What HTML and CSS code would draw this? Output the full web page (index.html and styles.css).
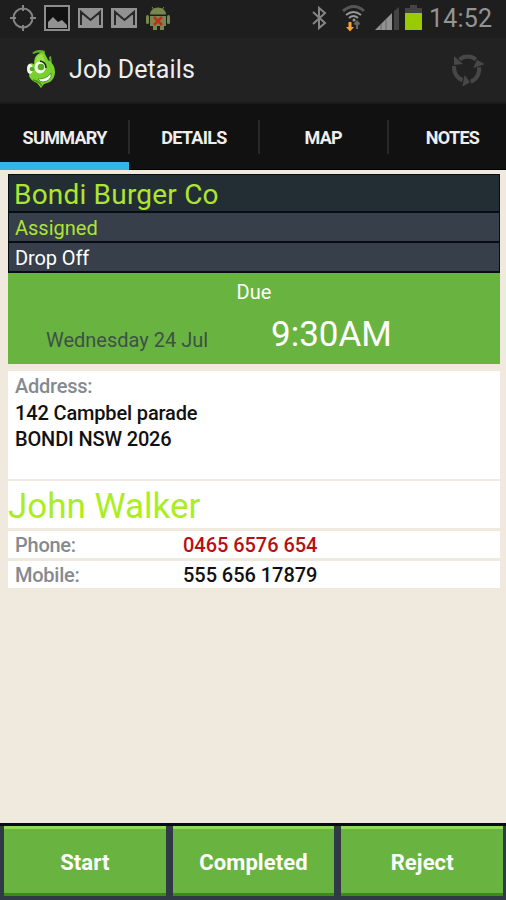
FILE: index.html
```html
<!DOCTYPE html>
<html lang="en">
<head>
  <meta charset="UTF-8">
  <title>Job Details</title>
  <link rel="stylesheet" href="styles.css">
</head>
<body>

  <!-- STATUS BAR -->
  <div class="status-bar">
    <svg class="status-icons" width="180" height="38" viewBox="0 0 180 38">
      <g fill="none" stroke="#858585" stroke-width="2">
        <circle cx="23" cy="18" r="9.5"/>
        <path d="M23 5v6M23 25v6M10 18h6M30 18h6"/>
      </g>
      <rect x="45" y="6" width="24" height="24" fill="#111" stroke="#8c8c8c" stroke-width="2"/>
      <path d="M48 28v-6l5-5 5 5 4-2 5 5v3z" fill="#929292"/>
      <g fill="#929292">
        <rect x="78" y="8" width="25" height="20"/>
        <rect x="111" y="8" width="26" height="20"/>
      </g>
      <path d="M81 25V12l9.500 8 9.500-8v13M115 25V12l9.500 8 9.500-8v13" fill="none" stroke="#292929" stroke-width="2"/>
      <g fill="#77874d">
        <path d="M150 14.500a8 7 0 0 1 16 0z"/>
        <rect x="150" y="16" width="16" height="10"/>
        <rect x="146" y="15" width="3" height="9" rx="1.500"/>
        <rect x="167" y="15" width="3" height="9" rx="1.500"/>
        <rect x="153" y="25" width="4" height="5"/>
        <rect x="160" y="25" width="4" height="5"/>
        <path d="M152 7l3 4M164 7l-3 4" stroke="#77874d"/>
      </g>
      <path d="M154 17l8 8M162 17l-8 8" stroke="#c22b20" stroke-width="2.500"/>
    </svg>
    <svg class="status-icons" width="125" height="38" viewBox="300 0 125 38">
      <path d="M313 12l12 11-6 5V8l6 5-12 11" fill="none" stroke="#858585" stroke-width="2"/>
      <path d="M343 11q11-9 21 0" fill="none" stroke="#555" stroke-width="3"/>
      <path d="M346 15q7.500-6 15 0M349 18q4.500-4 9 0" fill="none" stroke="#999" stroke-width="2"/>
      <circle cx="354" cy="20" r="1.500" fill="#999"/>
      <path d="M348.500 22h3v5h2.500l-4 4.500-4-4.500h2.500z" fill="#f5a32a"/>
      <path d="M357 29v-6M354.500 24.500l2.500-3 2.500 3" fill="none" stroke="#666" stroke-width="2"/>
      <path d="M375 30l17-17v17z" fill="#929292"/>
      <path d="M381 24v6M386 19v11" stroke="#666"/>
      <path d="M394 30V11l5-4v23z" fill="#444"/>
      <path d="M410 5h7v3h5v5h-17V8h5z" fill="#444"/>
      <rect x="405" y="13" width="17" height="17" fill="#99cc00"/>
    </svg>
    <span class="clock">14:52</span>
  </div>

  <!-- TITLE BAR -->
  <header class="title-bar">
    <svg class="logo" width="32" height="42" viewBox="25 49 32 42">
      <path d="M32 53q5-5 13-2l-1 3q-7-3-10 0z" fill="#5fb02a"/>
      <path d="M50 64l-1-7 2-1 1 8z" fill="#5fb02a"/>
      <path d="M34 64q0-9 6-11l4-1 4 8q7 4 7 12 0 6-5 10l-6 2-3 4-4-5q-6-2-8-7l1-5q-4-3-2-6 2-3 6-1z" fill="#7ad02d"/>
      <path d="M35 63q1-8 7-9l3 7-4 2z" fill="#9be04c"/>
      <ellipse cx="30" cy="69" rx="3" ry="5" fill="#f2faeb"/>
      <ellipse cx="40" cy="67.500" rx="5.500" ry="6" fill="#f2faeb"/>
      <circle cx="32" cy="69" r="2.300" fill="#5ca92a"/>
      <circle cx="41" cy="67" r="3.300" fill="#5ca92a"/>
      <path d="M40 61q6 1 6 7" fill="none" stroke="#182411" stroke-width="1.500"/>
      <path d="M38 79q9 0 13-6 1 8-8 9-3 0-5-3z" fill="#fff" stroke="#36751b" stroke-width=".7"/>
      <path d="M33 80q6 1 9 6" fill="none" stroke="#42941e" stroke-width="1.500"/>
    </svg>
    <h1>Job Details</h1>
    <svg class="sync" width="34" height="34" viewBox="0 0 34 34">
      <path d="M26 7.500A13 13 0 0 0 9.500 7.500" fill="none" stroke="#474747" stroke-width="4"/>
      <path d="M4 4v9l9-1z" fill="#474747"/>
      <g transform="rotate(120 17 17)">
        <path d="M26 7.500A13 13 0 0 0 9.500 7.500" fill="none" stroke="#474747" stroke-width="4"/>
        <path d="M4 4v9l9-1z" fill="#474747"/>
      </g>
      <g transform="rotate(240 17 17)">
        <path d="M26 7.500A13 13 0 0 0 9.500 7.500" fill="none" stroke="#474747" stroke-width="4"/>
        <path d="M4 4v9l9-1z" fill="#474747"/>
      </g>
    </svg>
  </header>

  <nav class="tabs">
    <a class="tab active">SUMMARY</a>
    <a class="tab">DETAILS</a>
    <a class="tab">MAP</a>
    <a class="tab">NOTES</a>
  </nav>

  <!-- JOB -->
  <main>
    <section class="job">
      <h2>Bondi Burger Co</h2>
      <p class="job-status">Assigned</p>
      <p class="job-type">Drop Off</p>
      <div class="due">
        <div class="due-label">Due</div>
        <div class="due-when">
          <span class="due-date">Wednesday 24 Jul</span>
          <span class="due-time">9:30AM</span>
        </div>
      </div>
    </section>

    <section class="address">
      <div class="label">Address:</div>
      <div class="street">142 Campbel parade</div>
      <div class="suburb">BONDI NSW 2026</div>
    </section>

    <section class="contact">
      <h3>John Walker</h3>
      <div class="row">
        <span class="label">Phone:</span>
        <span class="phone">0465 6576 654</span>
      </div>
      <div class="row">
        <span class="label">Mobile:</span>
        <span class="mobile">555 656 17879</span>
      </div>
    </section>
  </main>

  <footer class="actions">
    <button>Start</button>
    <button>Completed</button>
    <button>Reject</button>
  </footer>

</body>
</html>
```
FILE: styles.css
```css
* {
  box-sizing: border-box;
}

body {
  margin: 0;
  height: 900px;
  display: flex;
  flex-direction: column;
  overflow: hidden;
  background: #f0e9dd;
  font-family: Roboto, sans-serif;
  font-size: 20px;
}

h1, h2, h3, p {
  margin: 0;
  font-weight: 400;
}

.status-bar {
  display: flex;
  height: 38px;
  background: #1e1e1e;
}

.status-icons + .status-icons {
  margin-left: 120px;
}

.clock {
  margin-left: 4px;
  font-size: 25px;
  line-height: 37px;
  letter-spacing: 0.2px;
  color: #949494;
}

.title-bar {
  display: flex;
  align-items: center;
  height: 66px;
  padding: 0 22px 0 25px;
  background: #222;
  border-bottom: 2px solid #1b1b1b;
}

h1 {
  margin-left: 12px;
  font-size: 25px;
  line-height: 30px;
  letter-spacing: 0.1px;
  color: #eee;
}

.sync {
  margin-left: auto;
  margin-bottom: 2px;
}

.tabs {
  display: flex;
  height: 66px;
  background: #111;
  border-bottom: 1px solid #000;
}

.tab {
  position: relative;
  flex: 0 0 129.300px;
  line-height: 67px;
  text-align: center;
  font-size: 18px;
  font-weight: 700;
  letter-spacing: -0.7px;
  color: #eee;
}

.tab + .tab::before {
  content: "";
  position: absolute;
  left: -1px;
  top: 16px;
  width: 2px;
  height: 34px;
  background: #292929;
}

.tab.active {
  height: 66px;
  border-bottom: 8px solid #33b5e5;
}

main {
  flex: 1;
  padding: 4px 6px 0 8px;
}

.job {
  border: 1px solid #060d14;
  border-bottom: 0;
}

h2 {
  height: 38px;
  padding-left: 5px;
  line-height: 39px;
  font-size: 28px;
  letter-spacing: 0.2px;
  color: #aee52f;
  background: #232d34;
  border-bottom: 2px solid #060d14;
}

.job p {
  height: 30px;
  padding-left: 6px;
  line-height: 31px;
  background: #363f4a;
  border-bottom: 2px solid #060d14;
}

.job .job-status {
  color: #aee52f;
}

.job .job-type {
  color: #fff;
  letter-spacing: -0.1px;
}

.due {
  height: 91px;
  margin: 0 -1px;
  background: #69b440;
  color: #fff;
}

.due-label {
  padding-top: 7px;
  line-height: 24px;
  text-align: center;
}

.due-when {
  display: flex;
  align-items: flex-start;
  padding-left: 38px;
}

.due-date {
  width: 225px;
  line-height: 73px;
  color: #3d5148;
}

.due-time {
  line-height: 61px;
  font-size: 35px;
}

.address {
  height: 108px;
  margin-top: 7px;
  padding: 2px 7px;
  background: #fff;
  line-height: 26.700px;
  font-weight: 500;
  letter-spacing: -0.150px;
  color: #111;
}

.label {
  font-weight: 500;
  letter-spacing: -0.250px;
  color: #858a90;
}

.contact {
  display: flex;
  flex-direction: column;
  gap: 3px;
  margin-top: 2px;
}

h3 {
  height: 47px;
  line-height: 52px;
  font-size: 35px;
  color: #aaee22;
  background: #fff;
}

.row {
  display: flex;
  height: 27px;
  padding-left: 7px;
  line-height: 29px;
  font-weight: 500;
  color: #111;
  background: #fff;
}

.row .label {
  width: 168px;
}

.row .phone,
.row .mobile {
  letter-spacing: -0.050px;
}

.row .phone {
  color: #b80f12;
}

.actions {
  display: flex;
  gap: 7px;
  height: 77px;
  padding: 0 3px 4px 4px;
  background: #303946;
  border-top: 3px solid #07091d;
}

button {
  flex: 1;
  padding: 3px 0 0;
  border: 0;
  border-top: 3px solid #8cdc56;
  border-bottom: 3px solid #3c8b18;
  background: #69b440;
  font-family: Roboto, sans-serif;
  font-size: 22px;
  font-weight: 700;
  letter-spacing: 0.100px;
  color: #fff;
}
```
